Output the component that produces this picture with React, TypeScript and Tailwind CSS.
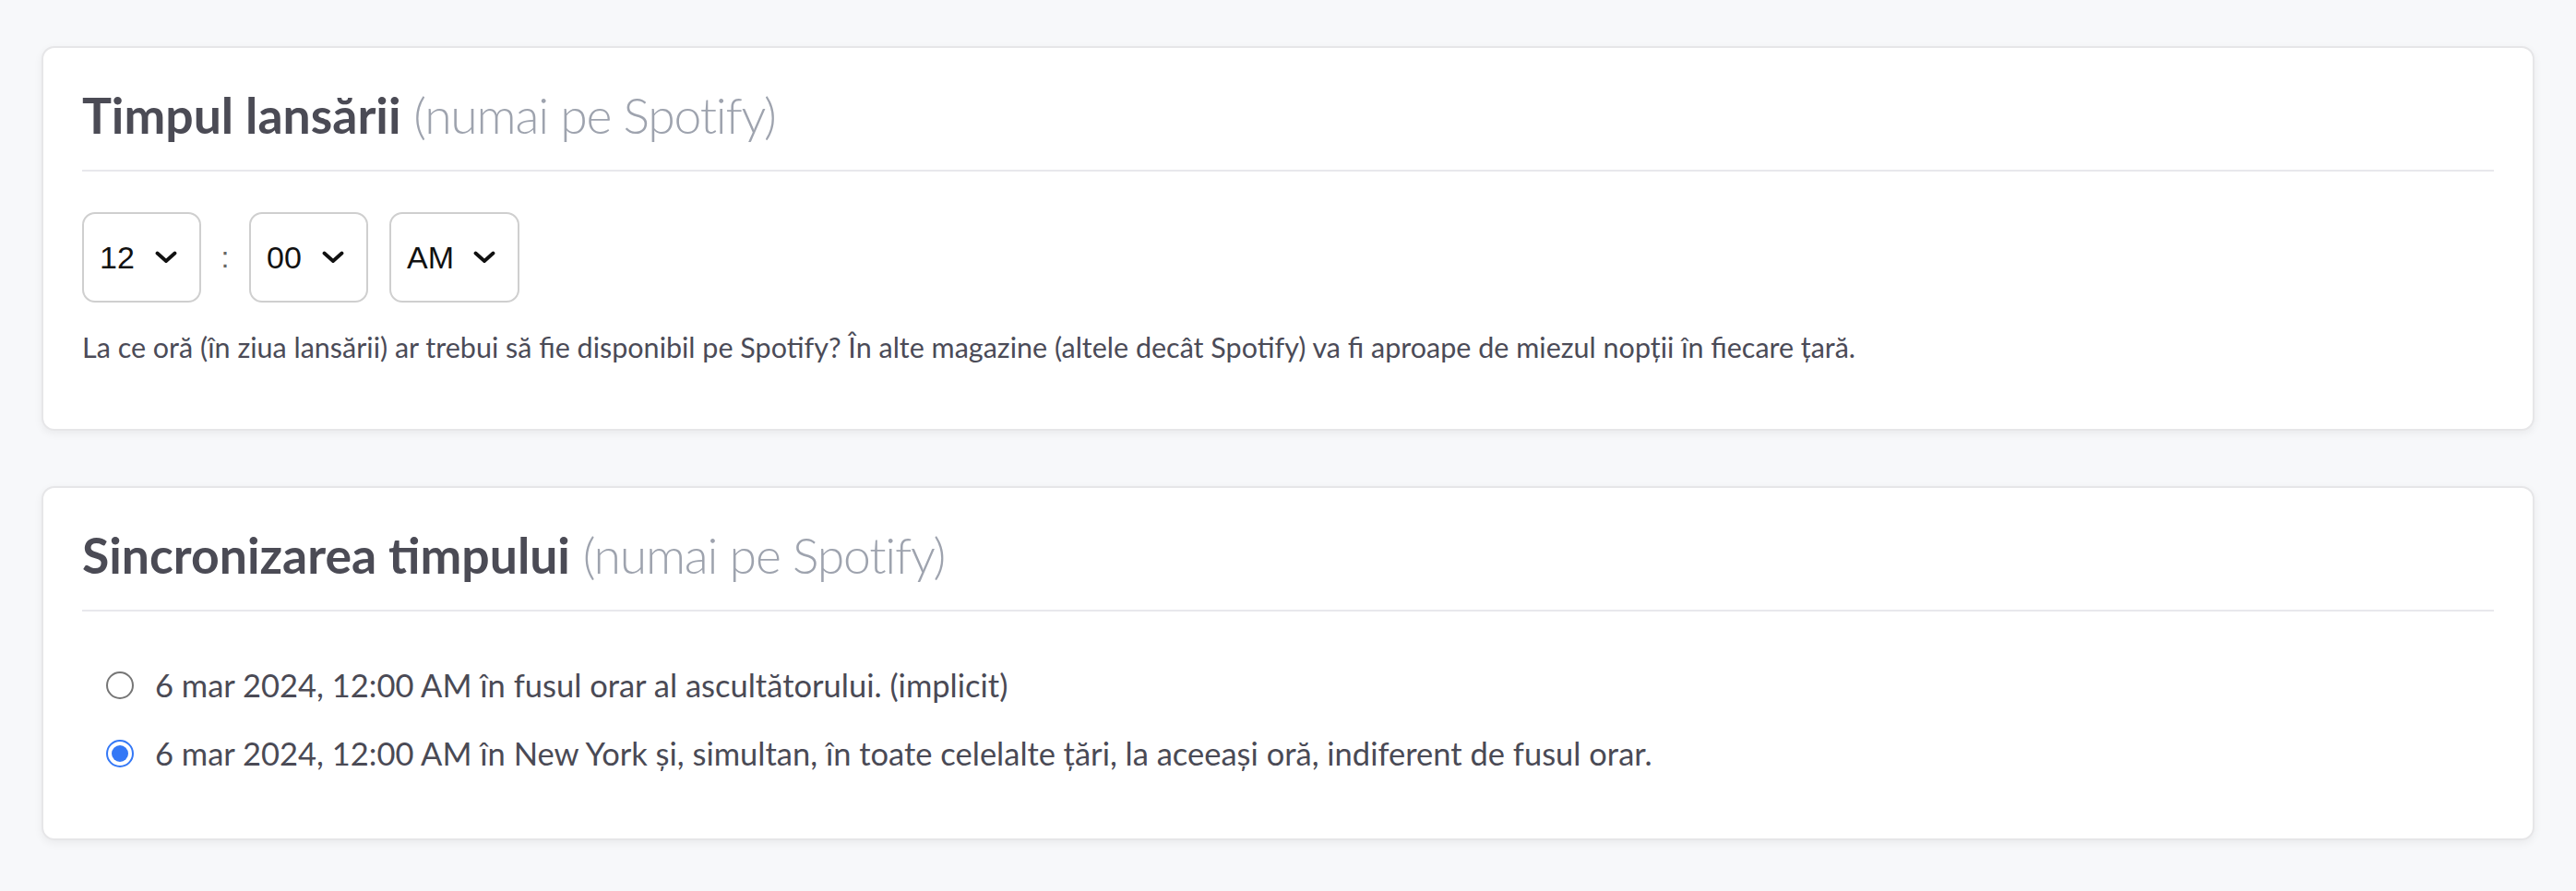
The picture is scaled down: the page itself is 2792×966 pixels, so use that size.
import React from 'react';

const Chevron: React.FC = () => (
  <svg width="24" height="14" viewBox="0 0 24 14" fill="none" className="shrink-0">
    <path d="M2.5 2.5 L12 11 L21.5 2.5" stroke="#111" strokeWidth="3.8" strokeLinecap="round" strokeLinejoin="round" />
  </svg>
);

const TimeSelect: React.FC<{ value: string; width: string }> = ({ value, width }) => (
  <div
    className={`${width} h-[98px] flex items-center justify-between pl-[17px] pr-[24px] border-2 border-[#cfcfcf] rounded-[14px] bg-white text-[34px] text-[#111] font-['Liberation_Sans',Arial,sans-serif]`}
  >
    <span>{value}</span>
    <Chevron />
  </div>
);

const Radio: React.FC<{ checked?: boolean }> = ({ checked }) =>
  checked ? (
    <span className="w-[30px] h-[30px] rounded-full border-[2.5px] border-[#3478f6] flex items-center justify-center shrink-0">
      <span className="w-[18px] h-[18px] rounded-full bg-[#3478f6]" />
    </span>
  ) : (
    <span className="w-[30px] h-[30px] rounded-full border-2 border-[#767676] shrink-0" />
  );

const CardTitle: React.FC<{ title: string }> = ({ title }) => (
  <div className="pb-[28px] border-b-2 border-[#e8e8ec]">
    <h2 className="text-[53.5px] leading-[1.2] text-[#4b4b55]">
      <span className="font-bold">{title}</span>{' '}
      <span className="font-light text-[#9ea3ae] tracking-[-1.2px]">(numai pe Spotify)</span>
    </h2>
  </div>
);

export default function App() {
  return (
    <div className="min-h-screen bg-[#f7f8fa] px-[45px] pb-[55px] font-['Lato','Noto_Sans',sans-serif] overflow-hidden">
      {/* bottom of the card above, cut off */}
      <div className="-mt-[100px] h-[88px] bg-white rounded-[14px] border-2 border-[#e6e6e8] shadow-[0_3px_10px_rgba(0,0,0,0.06)]" />

      <div className="flex flex-col gap-[60px] mt-[62px]">
        <section className="bg-white rounded-[14px] border-2 border-[#e6e6e8] shadow-[0_3px_10px_rgba(0,0,0,0.06)] px-[42px] pt-[40px] pb-[65px]">
          <CardTitle title="Timpul lansării" />
          <div className="flex items-center mt-[44px]">
            <TimeSelect value="12" width="w-[129px]" />
            <span className="w-[52px] text-center text-[32px] text-[#666] font-['Liberation_Sans',Arial,sans-serif]">:</span>
            <TimeSelect value="00" width="w-[129px]" />
            <div className="w-[23px]" />
            <TimeSelect value="AM" width="w-[141px]" />
          </div>
          <p className="mt-[26px] text-[30.5px] leading-[1.5] text-[#4b4b57]">
            La ce oră (în ziua lansării) ar trebui să fie disponibil pe Spotify? În alte magazine (altele decât Spotify) va fi aproape de miezul nopții în fiecare țară.
          </p>
        </section>

        <section className="bg-white rounded-[14px] border-2 border-[#e6e6e8] shadow-[0_3px_10px_rgba(0,0,0,0.06)] px-[42px] pt-[40px] pb-[65px]">
          <CardTitle title="Sincronizarea timpului" />
          <div className="flex flex-col gap-[20px] mt-[53px] pl-[26px] text-[34.5px] text-[#4a4a55]">
            <label className="flex items-center h-[54px] gap-[23px]">
              <Radio />
              <span>6 mar 2024, 12:00 AM în fusul orar al ascultătorului. (implicit)</span>
            </label>
            <label className="flex items-center h-[54px] gap-[23px]">
              <Radio checked />
              <span>6 mar 2024, 12:00 AM în New York și, simultan, în toate celelalte țări, la aceeași oră, indiferent de fusul orar.</span>
            </label>
          </div>
        </section>
      </div>
    </div>
  );
}
